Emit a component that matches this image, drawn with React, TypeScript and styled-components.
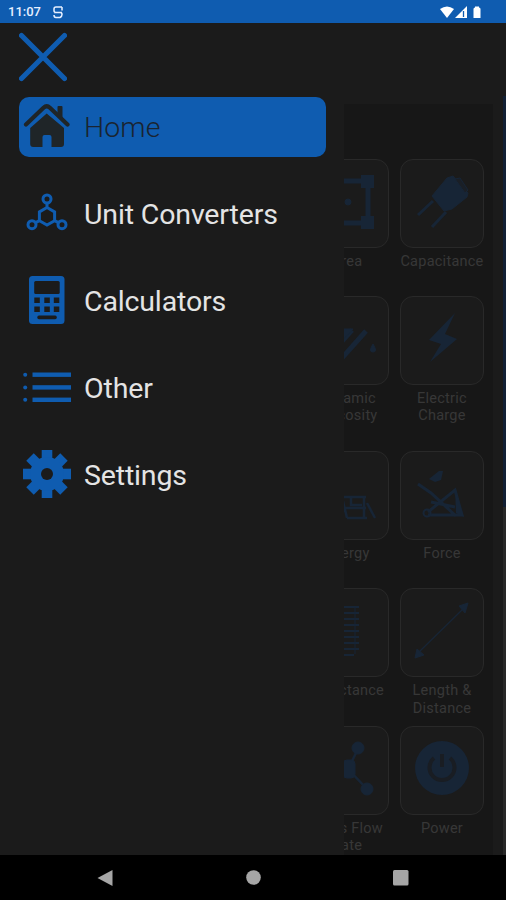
import React from 'react';
import styled, { createGlobalStyle } from 'styled-components';

const BLUE = '#0f5cb0';
const DARK = '#1b1b1b';
const DIM = '#172536';

const Global = createGlobalStyle`
  * { box-sizing: border-box; }
  body { margin: 0; background: ${DARK}; font-family: Roboto, sans-serif; }
  svg { display: block; flex: none; }
`;

const Screen = styled.div`
  width: 506px;
  height: 900px;
  display: flex;
  flex-direction: column;
  overflow: hidden;
  background: ${DARK};
`;

const StatusBar = styled.header`
  flex: 0 0 23px;
  display: flex;
  align-items: center;
  padding: 1px 24px 0 8px;
  background: ${BLUE};
  color: #e6efff;
`;

const Clock = styled.span`
  font-size: 13px;
  font-weight: 500;
  line-height: 22px;
  width: 45px;
`;

const StatusIcons = styled.div`
  margin-left: auto;
`;

const Body = styled.main`
  flex: 1;
  min-height: 0;
  display: flex;
`;

const Drawer = styled.aside`
  flex: 0 0 344px;
  padding: 8px 18px 0 19px;
`;

const CloseButton = styled.button`
  display: block;
  padding: 0;
  border: 0;
  background: none;
  height: 66px;
`;

const Menu = styled.nav`
  display: flex;
  flex-direction: column;
  gap: 27.2px;
`;

const MenuItem = styled.a<{ $active?: boolean }>`
  height: 60px;
  display: flex;
  align-items: center;
  gap: 13.5px;
  padding-left: 3.5px;
  border-radius: 10px;
  background: ${(p) => (p.$active ? BLUE : 'transparent')};
  color: ${(p) => (p.$active ? '#1a2430' : '#e4e4e4')};
  font-size: 28.5px;
  font-weight: ${(p) => (p.$active ? 300 : 400)};
  letter-spacing: ${(p) => (p.$active ? '0.1px' : '-0.15px')};
  white-space: nowrap;
`;

const Behind = styled.section`
  flex: 1;
  min-width: 0;
  display: flex;
  overflow: hidden;
`;

const Panel = styled.div`
  flex: 0 0 149px;
  margin-top: 81px;
  padding: 54.5px 9px 0 0;
  background: #171717;
  overflow: hidden;
`;

const Grid = styled.div`
  display: grid;
  grid-template-columns: 84px 84px;
  grid-template-rows: 137.3px 155px 137.3px 137.6px 137.3px;
  column-gap: 11px;
  justify-content: end;
`;

const Tile = styled.div`
  display: flex;
  flex-direction: column;
  align-items: center;
`;

const TileFrame = styled.div`
  flex: none;
  width: 84px;
  height: 89px;
  border: 1.5px solid #292929;
  border-radius: 13px;
  background: ${DARK};
`;

const TileLabel = styled.span`
  margin-top: 5px;
  width: 95px;
  text-align: center;
  font-size: 14.5px;
  line-height: 17.5px;
  letter-spacing: 0.25px;
  white-space: pre-line;
  color: #373737;
`;

const Scroll = styled.div`
  margin: 73px 0 0 auto;
  width: 3px;
  display: flex;
  flex-direction: column;
  background: #282828;
`;

const ScrollThumb = styled.div`
  height: 411px;
  background: #122035;
`;

const SystemNav = styled.footer`
  flex: 0 0 45px;
  display: flex;
  align-items: center;
  justify-content: space-between;
  padding: 0 97px;
  background: #000;
`;

const HomeIcon = () => (
  <svg width="48" height="48" viewBox="0 0 48 48" fill="#1f2528">
    <path d="M34.500 4q0-1 1-1h3q1 0 1 1v13l-5-4.500z" />
    <path d="M3 21.500 20.500 4.800q3.200-3 6.400 0L44.500 21.500" fill="none" stroke="#1f2528" strokeWidth="4.200" strokeLinecap="round" />
    <path d="M7.200 25 23.700 10.500 41 25v16q0 3-3 3h-9.500V34q0-2-2-2h-5q-2 0-2 2v10H10.200q-3 0-3-3z" />
  </svg>
);

const MoleculeIcon = () => (
  <svg width="48" height="48" viewBox="0 0 48 48" fill="none" stroke={BLUE} strokeWidth="3">
    <circle cx="24" cy="9" r="4" />
    <circle cx="9" cy="34.700" r="4" />
    <circle cx="39" cy="34.700" r="4" />
    <path d="m24 17.500 7.600 4.400v8.800l-7.600 4.400-7.600-4.400v-8.800zM24 13v4.500M16.400 30.700l-3.800 2M31.600 30.700l3.800 2" />
  </svg>
);

const CalculatorIcon = () => (
  <svg width="48" height="50" viewBox="0 0 48 50">
    <rect x="6" width="35.500" height="48" rx="3.500" fill={BLUE} />
    <g fill={DARK}>
      <rect x="11.200" y="5" width="25.500" height="13" rx="1.500" />
      {[21.5, 30.5].map((y) => [11.3, 21.3, 30.8].map((x) => <rect key={`${x}-${y}`} x={x} y={y} width="5.500" height="5.500" />))}
      <rect x="14.300" y="39.500" width="19.500" height="3.700" rx="1.700" />
    </g>
  </svg>
);

const ListIcon = () => (
  <svg width="48" height="48" viewBox="0 0 48 48" fill={BLUE}>
    {[9.7, 22.4, 34.8].map((y) => (
      <g key={y}>
        <circle cx="2.200" cy={y} r="2" />
        <rect x="9.500" y={y - 2.2} width="38.500" height="4.400" />
      </g>
    ))}
  </svg>
);

const GearIcon = () => (
  <svg width="48" height="52" viewBox="0 0 48 52" fill={BLUE}>
    {[0, 45, 90, 135].map((a) => (
      <rect key={a} x="18.700" y="0" width="10.600" height="48" transform={`rotate(${a} 24 24)`} />
    ))}
    <circle cx="24" cy="24" r="17" />
    <circle cx="24" cy="24" r="6" fill={DARK} />
  </svg>
);

const Pic = ({ children }: { children: React.ReactNode }) => (
  <svg width="82" height="86" viewBox="0 0 82 86" fill={DIM} stroke={DIM}>{children}</svg>
);

const pics: Record<string, React.ReactNode> = {
  area: (
    <Pic>
      <path d="M18 21h44v42H18z" fill="none" strokeWidth="5" />
      <path d="M55 15h13v13H55zM55 56h13v13H55zM12 15h12v13H12zM12 56h12v13H12z" stroke="none" />
      <circle cx="42" cy="42" r="3" />
    </Pic>
  ),
  capacitance: (
    <Pic>
      <path d="m46 18 6-2 15 17-1 4-15 12-8 2-12-15z" />
      <path d="M32 41 17 55M45 52 31 67" fill="none" strokeWidth="3" />
      <path d="m54 19 5-1 8 12-3 3z" strokeWidth="1" fill="#1a1f26" />
    </Pic>
  ),
  viscosity: (
    <Pic>
      <path d="m35 62 25-28M22 60l24-27" strokeWidth="5" />
      <path d="M34 32h13L35 45zM67 47q-5 8 0 8t0-8" />
    </Pic>
  ),
  bolt: <Pic><path d="M54 16 28 43l12 4-11 18 27-23-12-5z" stroke="none" /></Pic>,
  energy: (
    <Pic>
      <path d="M29 45h31M36 45l5 21M58 45v21M34 56h26M41 66h20M32 66l7-9M61 51l8 15M45 45v8h11" fill="none" strokeWidth="2.500" />
    </Pic>
  ),
  force: (
    <Pic>
      <path d="m17 32 13 9 25 23M27 60l27-22 7 25H27M30 50l24 5" fill="none" strokeWidth="3" />
      <path d="m28 27 10-8h4l-2 9-6 2zM54 37l9 28-8-4z" stroke="none" />
      <circle cx="26" cy="61" r="3.500" fill="none" strokeWidth="2" />
    </Pic>
  ),
  coil: (
    <Pic>
      <path d="M34 18h19M34 24h19M34 30h19M34 36h19M34 42h19M34 48h19M34 54h19M34 60h19M34 66h14" strokeWidth="2" />
      <path d="M49 18v47" strokeWidth="1" />
    </Pic>
  ),
  length: (
    <Pic>
      <path d="m17 64 47-46" strokeWidth="1.200" />
      <path d="m14 69 2-9 7 6zM67 14l-9 3 6 7z" />
    </Pic>
  ),
  flow: (
    <Pic>
      <path d="M52 22 42 42l19 20" fill="none" strokeWidth="2.500" />
      <circle cx="52" cy="21" r="6" />
      <circle cx="61" cy="62" r="6" />
      <rect x="37" y="33" width="12" height="18" rx="4" />
    </Pic>
  ),
  power: (
    <Pic>
      <circle cx="41" cy="41" r="27" stroke="none" />
      <path d="M33 31a12.500 12.500 0 1 0 16 0M41 27v13" fill="none" stroke="#191d23" strokeWidth="4" />
    </Pic>
  ),
};

const tiles: [string, string][] = [
  ['area', 'Area'],
  ['capacitance', 'Capacitance'],
  ['viscosity', 'Dynamic\nViscosity'],
  ['bolt', 'Electric\nCharge'],
  ['energy', 'Energy'],
  ['force', 'Force'],
  ['coil', 'Inductance'],
  ['length', 'Length &\nDistance'],
  ['flow', 'Mass Flow\nRate'],
  ['power', 'Power'],
];

const menu: [string, React.ComponentType][] = [
  ['Home', HomeIcon],
  ['Unit Converters', MoleculeIcon],
  ['Calculators', CalculatorIcon],
  ['Other', ListIcon],
  ['Settings', GearIcon],
];

export default function App() {
  return (
    <Screen>
      <Global />
      <StatusBar>
        <Clock>11:07</Clock>
        <svg width="10" height="13" viewBox="0 0 10 13" fill="none" stroke="#e6efff" strokeWidth="1.500">
          <path d="M9 1H3Q1 1 1 3v1.500Q1 6.500 3 6.500h4q2 0 2 2t-2 3H3q-2 0-2-2.500M9 1v3.500M1 6.500h8" />
        </svg>
        <StatusIcons>
          <svg width="42" height="13" viewBox="0 0 42 13" fill="#fff">
            <path d="M0 3q7-5 14 0L7 12z" />
            <path d="M15 12 27 0v12z" />
            <path d="M23.500 5v6" stroke={BLUE} strokeWidth="1.300" />
            <path d="M33.500 3q0-1.500 1.500-1.500V.5h4v1q1.500 0 1.500 1.500v9h-7z" />
          </svg>
        </StatusIcons>
      </StatusBar>
      <Body>
        <Drawer>
          <CloseButton aria-label="Close menu">
            <svg width="48" height="66" viewBox="0 0 48 66">
              <path d="m2.800 13 43 43M45.800 13l-43 43" transform="translate(-.3 -8.500)" stroke={BLUE} strokeWidth="5.200" strokeLinecap="round" />
            </svg>
          </CloseButton>
          <Menu>
            {menu.map(([label, Icon], i) => (
              <MenuItem key={label} $active={i === 0}>
                <Icon />
                {label}
              </MenuItem>
            ))}
          </Menu>
        </Drawer>
        <Behind>
          <Panel>
            <Grid>
              {tiles.map(([pic, label]) => (
                <Tile key={label}>
                  <TileFrame>{pics[pic]}</TileFrame>
                  <TileLabel>{label}</TileLabel>
                </Tile>
              ))}
            </Grid>
          </Panel>
          <Scroll>
            <ScrollThumb />
          </Scroll>
        </Behind>
      </Body>
      <SystemNav>
        <svg width="16" height="16" viewBox="0 0 16 16" fill="#a6a6a6"><path d="M15.500 0v16L.5 8z" /></svg>
        <svg width="15" height="15" viewBox="0 0 15 15" fill="#a6a6a6"><circle cx="7.500" cy="7.500" r="7.300" /></svg>
        <svg width="16" height="16" viewBox="0 0 16 16" fill="#a6a6a6"><rect width="15.500" height="15.500" rx="1.500" /></svg>
      </SystemNav>
    </Screen>
  );
}
